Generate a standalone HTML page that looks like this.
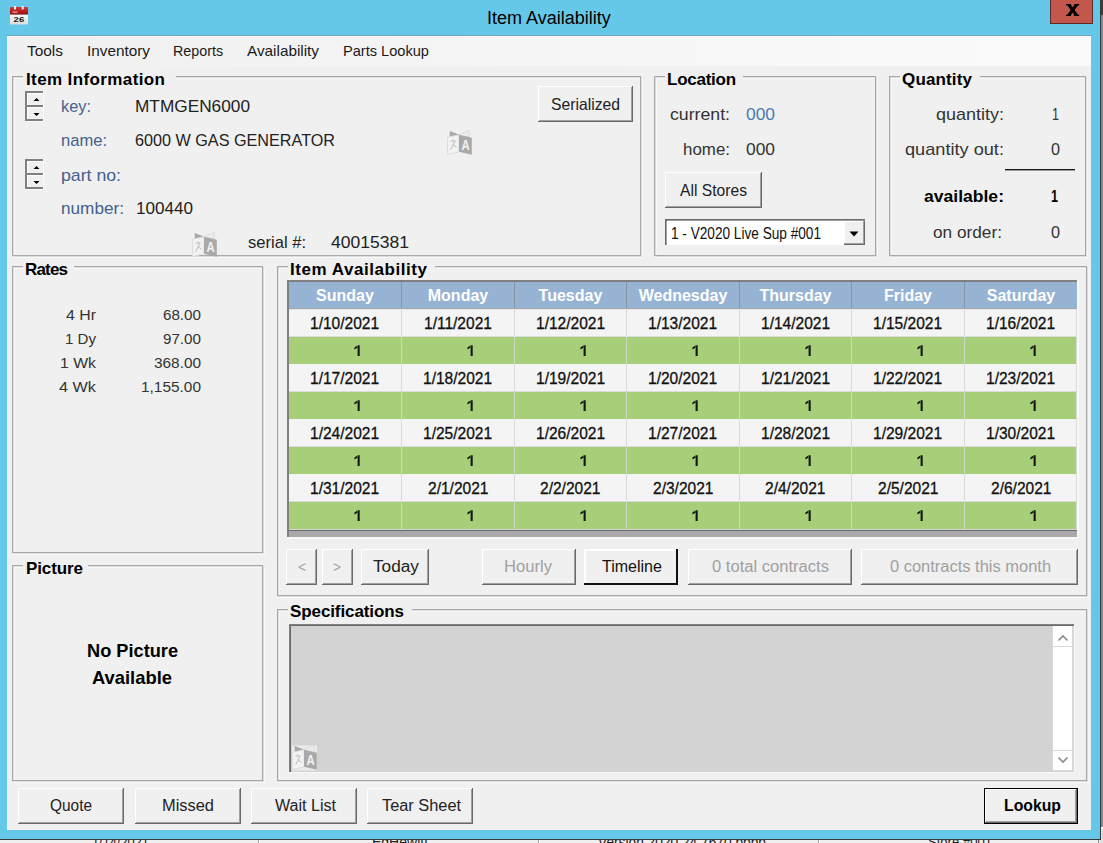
<!DOCTYPE html><html><head><meta charset="utf-8"><style>
html,body{margin:0;padding:0;width:1103px;height:843px;overflow:hidden;background:#f0f0f0}
body{position:relative;font-family:"Liberation Sans",sans-serif}
.a{position:absolute}
.t{position:absolute;white-space:nowrap;transform-origin:0 0}
</style></head><body>
<div class="a" style="left:0px;top:0px;width:1103px;height:843px;background:#f0f0f0;"></div>
<div class="a" style="left:258px;top:830px;width:1px;height:13px;background:#a0a0a0;"></div>
<div class="a" style="left:259px;top:830px;width:1px;height:13px;background:#fff;"></div>
<div class="a" style="left:538px;top:830px;width:1px;height:13px;background:#a0a0a0;"></div>
<div class="a" style="left:539px;top:830px;width:1px;height:13px;background:#fff;"></div>
<div class="a" style="left:818px;top:830px;width:1px;height:13px;background:#a0a0a0;"></div>
<div class="a" style="left:819px;top:830px;width:1px;height:13px;background:#fff;"></div>
<div class="a" style="left:1098px;top:830px;width:1px;height:13px;background:#909090;"></div>
<div class="a" style="left:1099px;top:830px;width:4px;height:13px;background:#e6e6e6;"></div>
<div class="t" style="left:92.00px;top:834px;font-size:15px;line-height:15px;color:#222;transform:scaleX(0.8539);">1/14/2021</div>
<div class="t" style="left:372.00px;top:834px;font-size:15px;line-height:15px;color:#222;transform:scaleX(0.9333);">EdHewitt</div>
<div class="t" style="left:598.00px;top:834px;font-size:15px;line-height:15px;color:#222;transform:scaleX(0.9154);">Version 2020.24.7670 bbbb</div>
<div class="t" style="left:928.00px;top:834px;font-size:15px;line-height:15px;color:#222;transform:scaleX(0.8716);">Store #001</div>
<div class="a" style="left:0px;top:0px;width:1101px;height:839px;background:#65c8e9;"></div>
<div class="a" style="left:1101px;top:0px;width:2px;height:827px;background:#7b8a99;"></div>
<div class="a" style="left:1101px;top:827px;width:2px;height:2px;background:#fafafa;"></div>
<div class="a" style="left:1101px;top:829px;width:2px;height:14px;background:#e0e0e0;"></div>
<div class="a" style="left:1101px;top:0px;width:2px;height:15px;background:#3c3c3c;"></div>
<div class="a" style="left:0px;top:839px;width:1101px;height:1px;background:#3a3a3a;"></div>
<div class="a" style="left:1100px;top:0px;width:1px;height:840px;background:#3a3a3a;"></div>
<div class="a" style="left:1101px;top:829px;width:2px;height:11px;background:#e0e0e0;"></div>
<div class="a" style="left:10px;top:7px;width:18px;height:18px;"></div>
<svg class="a" style="left:10px;top:6px" width="18" height="20" viewBox="0 0 18 20">
<defs><linearGradient id="rg" x1="0" y1="0" x2="0" y2="1"><stop offset="0" stop-color="#d23a3a"/><stop offset="1" stop-color="#a30a0a"/></linearGradient>
<linearGradient id="wg" x1="0" y1="0" x2="0" y2="1"><stop offset="0" stop-color="#fafafa"/><stop offset="1" stop-color="#dcdcdc"/></linearGradient></defs>
<rect x="0" y="8.4" width="18" height="10" rx="0.8" fill="url(#wg)"/>
<rect x="0" y="1" width="18" height="7.6" rx="1.2" fill="url(#rg)"/>
<rect x="4" y="0" width="2" height="3.4" fill="#f4f4f4"/><rect x="11.7" y="0" width="2" height="3.4" fill="#f4f4f4"/>
<rect x="2.5" y="5.4" width="5" height="1.6" fill="#d88a8a"/>
<text x="3.6" y="15.8" font-family="Liberation Sans" font-weight="bold" font-size="8" textLength="10.6" lengthAdjust="spacingAndGlyphs" fill="#1a1010">26</text>
</svg>
<div class="t" style="left:487.00px;top:9px;font-size:18px;line-height:18px;color:#000;">Item Availability</div>
<div class="a" style="left:1050px;top:0px;width:43px;height:24px;background:#c4574c;border:1px solid #5e2a25;border-top:none;box-sizing:border-box;"></div>
<svg class="a" style="left:0;top:0" width="1103" height="30"><polygon points="1066.3,4 1070.2,4 1079,16 1075.1,16" fill="#000"/><polygon points="1075.1,4 1079,4 1070.2,16 1066.3,16" fill="#000"/><rect x="1066" y="4" width="5" height="1.3" fill="#000"/><rect x="1074.2" y="4" width="5" height="1.3" fill="#000"/><rect x="1066" y="14.7" width="5" height="1.3" fill="#000"/><rect x="1074.2" y="14.7" width="5" height="1.3" fill="#000"/></svg>
<div class="a" style="left:6px;top:35px;width:1085px;height:1px;background:#74a6c2;"></div>
<div class="a" style="left:7px;top:36px;width:1084px;height:794px;background:#f0f0f0;"></div>
<div class="a" style="left:7px;top:36px;width:1084px;height:30px;background:linear-gradient(to right,#f0f0f0,#fbfbfb);"></div>
<div class="a" style="left:7px;top:36px;width:1px;height:794px;background:#faf6f6;"></div>
<div class="a" style="left:7px;top:36px;width:1084px;height:1px;background:#faf6f6;"></div>
<div class="t" style="left:27.00px;top:43px;font-size:15px;line-height:15px;color:#1a1a1a;transform:scaleX(1.0278);">Tools</div>
<div class="t" style="left:87.00px;top:43px;font-size:15px;line-height:15px;color:#1a1a1a;transform:scaleX(1.0207);">Inventory</div>
<div class="t" style="left:173.00px;top:43px;font-size:15px;line-height:15px;color:#1a1a1a;transform:scaleX(0.9524);">Reports</div>
<div class="t" style="left:247.00px;top:43px;font-size:15px;line-height:15px;color:#1a1a1a;transform:scaleX(1.0202);">Availability</div>
<div class="t" style="left:343.00px;top:43px;font-size:15px;line-height:15px;color:#1a1a1a;transform:scaleX(0.9726);">Parts Lookup</div>
<div class="a" style="left:14px;top:78px;width:629px;height:180px;border:1px solid #f8f8f8;box-sizing:border-box;"></div>
<div class="a" style="left:13px;top:77px;width:629px;height:180px;border:1px solid #dedede;box-sizing:border-box;"></div>
<div class="a" style="left:12px;top:76px;width:629px;height:180px;border:1px solid #a8a8a8;box-sizing:border-box;"></div>
<div class="a" style="left:23px;top:74px;width:153px;height:5px;background:#f0f0f0;"></div>
<div class="t" style="left:26.00px;top:71px;font-size:17px;line-height:17px;color:#000;font-weight:bold;letter-spacing:0.387px;">Item Information</div>
<div class="a" style="left:25px;top:91px;width:18px;height:2px;background:#808080;"></div>
<div class="a" style="left:25px;top:91px;width:2px;height:30px;background:#808080;"></div>
<div class="a" style="left:27px;top:105px;width:16px;height:2px;background:#808080;"></div>
<div class="a" style="left:27px;top:119px;width:16px;height:2px;background:#808080;"></div>
<div class="a" style="left:27px;top:93px;width:16px;height:1px;background:#fdfdfd;"></div>
<div class="a" style="left:27px;top:93px;width:1px;height:12px;background:#fdfdfd;"></div>
<div class="a" style="left:27px;top:107px;width:16px;height:1px;background:#fdfdfd;"></div>
<div class="a" style="left:27px;top:107px;width:1px;height:12px;background:#fdfdfd;"></div>
<div class="a" style="left:43px;top:91px;width:1px;height:31px;background:#fafafa;"></div>
<div class="a" style="left:25px;top:121px;width:19px;height:1px;background:#fafafa;"></div>
<svg class="a" style="left:33px;top:97px" width="7" height="20"><path d="M0.5 4 L3.5 1 L6.5 4Z M0.5 16 L3.5 19 L6.5 16Z" fill="#000"/></svg>
<div class="a" style="left:25px;top:159px;width:18px;height:2px;background:#808080;"></div>
<div class="a" style="left:25px;top:159px;width:2px;height:30px;background:#808080;"></div>
<div class="a" style="left:27px;top:173px;width:16px;height:2px;background:#808080;"></div>
<div class="a" style="left:27px;top:187px;width:16px;height:2px;background:#808080;"></div>
<div class="a" style="left:27px;top:161px;width:16px;height:1px;background:#fdfdfd;"></div>
<div class="a" style="left:27px;top:161px;width:1px;height:12px;background:#fdfdfd;"></div>
<div class="a" style="left:27px;top:175px;width:16px;height:1px;background:#fdfdfd;"></div>
<div class="a" style="left:27px;top:175px;width:1px;height:12px;background:#fdfdfd;"></div>
<div class="a" style="left:43px;top:159px;width:1px;height:31px;background:#fafafa;"></div>
<div class="a" style="left:25px;top:189px;width:19px;height:1px;background:#fafafa;"></div>
<svg class="a" style="left:33px;top:165px" width="7" height="20"><path d="M0.5 4 L3.5 1 L6.5 4Z M0.5 16 L3.5 19 L6.5 16Z" fill="#000"/></svg>
<div class="t" style="left:61.00px;top:98px;font-size:17px;line-height:17px;color:#44618f;transform:scaleX(0.9617);">key:</div>
<div class="t" style="left:135.00px;top:98px;font-size:17px;line-height:17px;color:#222;transform:scaleX(1.0142);">MTMGEN6000</div>
<div class="t" style="left:61.00px;top:132px;font-size:17px;line-height:17px;color:#44618f;transform:scaleX(0.9733);">name:</div>
<div class="t" style="left:135.00px;top:132px;font-size:17px;line-height:17px;color:#222;transform:scaleX(0.9522);">6000 W GAS GENERATOR</div>
<div class="t" style="left:61.00px;top:167px;font-size:17px;line-height:17px;color:#44618f;transform:scaleX(1.0411);">part no:</div>
<div class="t" style="left:61.00px;top:200px;font-size:17px;line-height:17px;color:#44618f;transform:scaleX(1.0098);">number:</div>
<div class="t" style="left:136.00px;top:200px;font-size:17px;line-height:17px;color:#222;transform:scaleX(1.0054);">100440</div>
<div class="t" style="left:248.00px;top:234px;font-size:17px;line-height:17px;color:#222;transform:scaleX(0.9748);">serial #:</div>
<div class="t" style="left:331.00px;top:234px;font-size:17px;line-height:17px;color:#222;transform:scaleX(1.0311);">40015381</div>
<div class="a" style="left:538px;top:86px;width:95px;height:36px;background:#f0f0f0;box-shadow:inset -1px -1px 0 #696969, inset 1px 1px 0 #fff, inset -2px -2px 0 #a0a0a0;"></div>
<div class="t" style="left:551.00px;top:96px;font-size:16.5px;line-height:16.5px;color:#222;transform:scaleX(0.9526);">Serialized</div>
<svg class="a" style="left:443px;top:126px" width="34" height="34" viewBox="0 0 34 34">
<polygon points="6.7,5 16,8.5 16,9.5 6.7,11.3" fill="#a8a8a8"/>
<polygon points="16,8.5 26.2,4.2 26.2,10.8 16,9.5" fill="#ececec" stroke="#d8d8d8" stroke-width="0.8"/>
<polygon points="4.5,11.3 16,8.7 16,25.8 4.5,28.6" fill="#f2f2f2" stroke="#dadada" stroke-width="0.9"/>
<polygon points="16,8.7 28.8,11.7 28.8,28.8 16,25.8" fill="#a9a9a9"/>
<path d="M7.5 15.2 L12.3 14.8 M12 15 L7.8 23.5 M9.6 13.3 L10.3 14.6 M9.8 18.5 L13.5 21.3" stroke="#bcbcbc" stroke-width="1" fill="none"/>
<text x="18.5" y="23.8" font-family="Liberation Sans" font-weight="bold" font-size="14" textLength="8.2" lengthAdjust="spacingAndGlyphs" fill="#f4f4f4">A</text></svg>
<svg class="a" style="left:188px;top:228px" width="34" height="34" viewBox="0 0 34 34">
<polygon points="6.7,5 16,8.5 16,9.5 6.7,11.3" fill="#a8a8a8"/>
<polygon points="16,8.5 26.2,4.2 26.2,10.8 16,9.5" fill="#ececec" stroke="#d8d8d8" stroke-width="0.8"/>
<polygon points="4.5,11.3 16,8.7 16,25.8 4.5,28.6" fill="#f2f2f2" stroke="#dadada" stroke-width="0.9"/>
<polygon points="16,8.7 28.8,11.7 28.8,28.8 16,25.8" fill="#a9a9a9"/>
<path d="M7.5 15.2 L12.3 14.8 M12 15 L7.8 23.5 M9.6 13.3 L10.3 14.6 M9.8 18.5 L13.5 21.3" stroke="#bcbcbc" stroke-width="1" fill="none"/>
<text x="18.5" y="23.8" font-family="Liberation Sans" font-weight="bold" font-size="14" textLength="8.2" lengthAdjust="spacingAndGlyphs" fill="#f4f4f4">A</text></svg>
<div class="a" style="left:656px;top:78px;width:222px;height:180px;border:1px solid #f8f8f8;box-sizing:border-box;"></div>
<div class="a" style="left:655px;top:77px;width:222px;height:180px;border:1px solid #dedede;box-sizing:border-box;"></div>
<div class="a" style="left:654px;top:76px;width:222px;height:180px;border:1px solid #a8a8a8;box-sizing:border-box;"></div>
<div class="a" style="left:665px;top:74px;width:78px;height:5px;background:#f0f0f0;"></div>
<div class="t" style="left:667.00px;top:71px;font-size:17px;line-height:17px;color:#000;font-weight:bold;letter-spacing:-0.258px;">Location</div>
<div class="t" style="left:670.00px;top:106px;font-size:17px;line-height:17px;color:#333;transform:scaleX(1.0411);">current:</div>
<div class="t" style="left:746.00px;top:106px;font-size:17px;line-height:17px;color:#4a7ab4;transform:scaleX(1.0215);">000</div>
<div class="t" style="left:683.00px;top:141px;font-size:17px;line-height:17px;color:#333;transform:scaleX(0.9945);">home:</div>
<div class="t" style="left:746.00px;top:141px;font-size:17px;line-height:17px;color:#333;transform:scaleX(1.0215);">000</div>
<div class="a" style="left:665px;top:172px;width:97px;height:36px;background:#f0f0f0;box-shadow:inset -1px -1px 0 #696969, inset 1px 1px 0 #fff, inset -2px -2px 0 #a0a0a0;"></div>
<div class="t" style="left:680.00px;top:182px;font-size:16.5px;line-height:16.5px;color:#222;transform:scaleX(0.9487);">All Stores</div>
<div class="a" style="left:665px;top:219px;width:201px;height:27px;background:#fff;"></div>
<div class="a" style="left:665px;top:219px;width:201px;height:2px;background:#696969;"></div>
<div class="a" style="left:665px;top:219px;width:2px;height:27px;background:#696969;"></div>
<div class="a" style="left:667px;top:220px;width:199px;height:1px;background:#a0a0a0;"></div>
<div class="a" style="left:666px;top:221px;width:1px;height:25px;background:#a0a0a0;"></div>
<div class="a" style="left:865px;top:219px;width:1px;height:27px;background:#f0f0f0;"></div>
<div class="a" style="left:665px;top:245px;width:201px;height:1px;background:#f0f0f0;"></div>
<div class="t" style="left:671.00px;top:226px;font-size:16px;line-height:16px;color:#111;transform:scaleX(0.8515);">1 - V2020 Live Sup #001</div>
<div class="a" style="left:844px;top:221px;width:21px;height:24px;background:#f0f0f0;box-shadow:inset -1px -1px 0 #696969, inset -2px -2px 0 #a0a0a0, inset 1px 1px 0 #fff;"></div>
<svg class="a" style="left:849px;top:231px" width="10" height="6"><path d="M0.5 0.5 L9.5 0.5 L5 5.5Z" fill="#000"/></svg>
<div class="a" style="left:891px;top:78px;width:197px;height:180px;border:1px solid #f8f8f8;box-sizing:border-box;"></div>
<div class="a" style="left:890px;top:77px;width:197px;height:180px;border:1px solid #dedede;box-sizing:border-box;"></div>
<div class="a" style="left:889px;top:76px;width:197px;height:180px;border:1px solid #a8a8a8;box-sizing:border-box;"></div>
<div class="a" style="left:900px;top:74px;width:80px;height:5px;background:#f0f0f0;"></div>
<div class="t" style="left:902.00px;top:71px;font-size:17px;line-height:17px;color:#000;font-weight:bold;letter-spacing:0.152px;">Quantity</div>
<div class="t" style="left:936.00px;top:106px;font-size:17px;line-height:17px;color:#333;transform:scaleX(1.0582);">quantity:</div>
<div class="t" style="left:1052.00px;top:106px;font-size:17px;line-height:17px;color:#333;transform:scaleX(0.7419);">1</div>
<div class="t" style="left:905.00px;top:141px;font-size:17px;line-height:17px;color:#333;transform:scaleX(1.0685);">quantity out:</div>
<div class="t" style="left:1051.00px;top:141px;font-size:17px;line-height:17px;color:#333;transform:scaleX(0.9539);">0</div>
<div class="a" style="left:1005px;top:169px;width:70px;height:1px;background:#1a1a1a;"></div>
<div class="a" style="left:1005px;top:170px;width:70px;height:1px;background:#9a9a9a;"></div>
<div class="t" style="left:924.00px;top:188px;font-size:17px;line-height:17px;color:#000;font-weight:bold;transform:scaleX(1.0320);">available:</div>
<div class="t" style="left:1051.00px;top:188px;font-size:17px;line-height:17px;color:#000;font-weight:bold;transform:scaleX(0.7419);">1</div>
<div class="t" style="left:933.00px;top:224px;font-size:17px;line-height:17px;color:#333;transform:scaleX(1.0134);">on order:</div>
<div class="t" style="left:1051.00px;top:224px;font-size:17px;line-height:17px;color:#333;transform:scaleX(0.9539);">0</div>
<div class="a" style="left:14px;top:268px;width:251px;height:287px;border:1px solid #f8f8f8;box-sizing:border-box;"></div>
<div class="a" style="left:13px;top:267px;width:251px;height:287px;border:1px solid #dedede;box-sizing:border-box;"></div>
<div class="a" style="left:12px;top:266px;width:251px;height:287px;border:1px solid #a8a8a8;box-sizing:border-box;"></div>
<div class="a" style="left:23px;top:264px;width:51px;height:5px;background:#f0f0f0;"></div>
<div class="t" style="left:25.00px;top:261px;font-size:17px;line-height:17px;color:#000;font-weight:bold;letter-spacing:-0.831px;">Rates</div>
<div class="t" style="left:66.00px;top:307px;font-size:15px;line-height:15px;color:#333;transform:scaleX(1.0582);">4 Hr</div>
<div class="t" style="left:163.00px;top:307px;font-size:15px;line-height:15px;color:#333;transform:scaleX(1.0113);">68.00</div>
<div class="t" style="left:65.00px;top:331px;font-size:15px;line-height:15px;color:#333;transform:scaleX(1.0057);">1 Dy</div>
<div class="t" style="left:163.00px;top:331px;font-size:15px;line-height:15px;color:#333;transform:scaleX(1.0113);">97.00</div>
<div class="t" style="left:60.00px;top:355px;font-size:15px;line-height:15px;color:#333;transform:scaleX(1.0503);">1 Wk</div>
<div class="t" style="left:154.00px;top:355px;font-size:15px;line-height:15px;color:#333;transform:scaleX(1.0240);">368.00</div>
<div class="t" style="left:59.00px;top:379px;font-size:15px;line-height:15px;color:#333;transform:scaleX(1.0795);">4 Wk</div>
<div class="t" style="left:141.00px;top:379px;font-size:15px;line-height:15px;color:#333;transform:scaleX(1.0270);">1,155.00</div>
<div class="a" style="left:14px;top:567px;width:251px;height:216px;border:1px solid #f8f8f8;box-sizing:border-box;"></div>
<div class="a" style="left:13px;top:566px;width:251px;height:216px;border:1px solid #dedede;box-sizing:border-box;"></div>
<div class="a" style="left:12px;top:565px;width:251px;height:216px;border:1px solid #a8a8a8;box-sizing:border-box;"></div>
<div class="a" style="left:23px;top:563px;width:65px;height:5px;background:#f0f0f0;"></div>
<div class="t" style="left:26.00px;top:560px;font-size:17px;line-height:17px;color:#000;font-weight:bold;letter-spacing:-0.105px;">Picture</div>
<div class="t" style="left:87.00px;top:641px;font-size:19px;line-height:19px;color:#000;font-weight:bold;transform:scaleX(0.9579);">No Picture</div>
<div class="t" style="left:92.00px;top:668px;font-size:19px;line-height:19px;color:#000;font-weight:bold;transform:scaleX(0.9668);">Available</div>
<div class="a" style="left:279px;top:268px;width:810px;height:330px;border:1px solid #f8f8f8;box-sizing:border-box;"></div>
<div class="a" style="left:278px;top:267px;width:810px;height:330px;border:1px solid #dedede;box-sizing:border-box;"></div>
<div class="a" style="left:277px;top:266px;width:810px;height:330px;border:1px solid #a8a8a8;box-sizing:border-box;"></div>
<div class="a" style="left:288px;top:264px;width:147px;height:5px;background:#f0f0f0;"></div>
<div class="t" style="left:290.00px;top:261px;font-size:17px;line-height:17px;color:#000;font-weight:bold;letter-spacing:0.551px;">Item Availability</div>
<div class="a" style="left:287px;top:280px;width:792px;height:259px;background:#f8f8f8;"></div>
<div class="a" style="left:287px;top:280px;width:790px;height:257px;background:#808080;"></div>
<div class="a" style="left:289px;top:282px;width:788px;height:247px;background:#f4f4f4;"></div>
<div class="a" style="left:289px;top:529px;width:788px;height:1px;background:#d8d8d8;"></div>
<div class="a" style="left:289px;top:530px;width:788px;height:1px;background:#696969;"></div>
<div class="a" style="left:289px;top:531px;width:788px;height:6px;background:#a9a9a9;"></div>
<div class="a" style="left:289px;top:282px;width:788px;height:26px;background:#97b3d4;"></div>
<div class="a" style="left:289px;top:308px;width:788px;height:1px;background:#a3a9b0;"></div>
<div class="a" style="left:289px;top:309px;width:788px;height:1px;background:#e4e4e6;"></div>
<div class="a" style="left:401px;top:282px;width:1px;height:26px;background:#8894a4;"></div>
<div class="a" style="left:514px;top:282px;width:1px;height:26px;background:#8894a4;"></div>
<div class="a" style="left:626px;top:282px;width:1px;height:26px;background:#8894a4;"></div>
<div class="a" style="left:739px;top:282px;width:1px;height:26px;background:#8894a4;"></div>
<div class="a" style="left:851px;top:282px;width:1px;height:26px;background:#8894a4;"></div>
<div class="a" style="left:964px;top:282px;width:1px;height:26px;background:#8894a4;"></div>
<div class="a" style="left:289px;top:310px;width:788px;height:26px;background:#f4f4f4;"></div>
<div class="a" style="left:289px;top:336px;width:788px;height:1px;background:#dcdbe0;"></div>
<div class="a" style="left:289px;top:337px;width:788px;height:27px;background:#a7cf79;"></div>
<div class="a" style="left:401px;top:310px;width:1px;height:26px;background:#d9d9d9;"></div>
<div class="a" style="left:401px;top:337px;width:1px;height:27px;background:#cdd8c4;"></div>
<div class="a" style="left:514px;top:310px;width:1px;height:26px;background:#d9d9d9;"></div>
<div class="a" style="left:514px;top:337px;width:1px;height:27px;background:#cdd8c4;"></div>
<div class="a" style="left:626px;top:310px;width:1px;height:26px;background:#d9d9d9;"></div>
<div class="a" style="left:626px;top:337px;width:1px;height:27px;background:#cdd8c4;"></div>
<div class="a" style="left:739px;top:310px;width:1px;height:26px;background:#d9d9d9;"></div>
<div class="a" style="left:739px;top:337px;width:1px;height:27px;background:#cdd8c4;"></div>
<div class="a" style="left:851px;top:310px;width:1px;height:26px;background:#d9d9d9;"></div>
<div class="a" style="left:851px;top:337px;width:1px;height:27px;background:#cdd8c4;"></div>
<div class="a" style="left:964px;top:310px;width:1px;height:26px;background:#d9d9d9;"></div>
<div class="a" style="left:964px;top:337px;width:1px;height:27px;background:#cdd8c4;"></div>
<div class="a" style="left:1076px;top:310px;width:1px;height:26px;background:#dcdcdc;"></div>
<div class="a" style="left:1076px;top:337px;width:1px;height:27px;background:#d4dccc;"></div>
<div class="t" style="left:310.47px;top:316px;font-size:16px;line-height:16px;color:#111;transform:scaleX(0.9700);-webkit-text-stroke:0.3px #111;">1/10/2021</div>
<svg class="a" style="left:354.0px;top:345px" width="8" height="11"><path d="M3.6 0.3 L5.7 0.3 L5.7 11 L3.6 11 Z M3.8 0.3 L0.4 2.6 L0.4 4.6 L4.2 2.2Z" fill="#151515"/></svg>
<div class="t" style="left:424.05px;top:316px;font-size:16px;line-height:16px;color:#111;transform:scaleX(0.9700);-webkit-text-stroke:0.3px #111;">1/11/2021</div>
<svg class="a" style="left:467.0px;top:345px" width="8" height="11"><path d="M3.6 0.3 L5.7 0.3 L5.7 11 L3.6 11 Z M3.8 0.3 L0.4 2.6 L0.4 4.6 L4.2 2.2Z" fill="#151515"/></svg>
<div class="t" style="left:535.97px;top:316px;font-size:16px;line-height:16px;color:#111;transform:scaleX(0.9700);-webkit-text-stroke:0.3px #111;">1/12/2021</div>
<svg class="a" style="left:579.5px;top:345px" width="8" height="11"><path d="M3.6 0.3 L5.7 0.3 L5.7 11 L3.6 11 Z M3.8 0.3 L0.4 2.6 L0.4 4.6 L4.2 2.2Z" fill="#151515"/></svg>
<div class="t" style="left:648.47px;top:316px;font-size:16px;line-height:16px;color:#111;transform:scaleX(0.9700);-webkit-text-stroke:0.3px #111;">1/13/2021</div>
<svg class="a" style="left:692.0px;top:345px" width="8" height="11"><path d="M3.6 0.3 L5.7 0.3 L5.7 11 L3.6 11 Z M3.8 0.3 L0.4 2.6 L0.4 4.6 L4.2 2.2Z" fill="#151515"/></svg>
<div class="t" style="left:760.97px;top:316px;font-size:16px;line-height:16px;color:#111;transform:scaleX(0.9700);-webkit-text-stroke:0.3px #111;">1/14/2021</div>
<svg class="a" style="left:804.5px;top:345px" width="8" height="11"><path d="M3.6 0.3 L5.7 0.3 L5.7 11 L3.6 11 Z M3.8 0.3 L0.4 2.6 L0.4 4.6 L4.2 2.2Z" fill="#151515"/></svg>
<div class="t" style="left:873.47px;top:316px;font-size:16px;line-height:16px;color:#111;transform:scaleX(0.9700);-webkit-text-stroke:0.3px #111;">1/15/2021</div>
<svg class="a" style="left:917.0px;top:345px" width="8" height="11"><path d="M3.6 0.3 L5.7 0.3 L5.7 11 L3.6 11 Z M3.8 0.3 L0.4 2.6 L0.4 4.6 L4.2 2.2Z" fill="#151515"/></svg>
<div class="t" style="left:986.47px;top:316px;font-size:16px;line-height:16px;color:#111;transform:scaleX(0.9700);-webkit-text-stroke:0.3px #111;">1/16/2021</div>
<svg class="a" style="left:1030.0px;top:345px" width="8" height="11"><path d="M3.6 0.3 L5.7 0.3 L5.7 11 L3.6 11 Z M3.8 0.3 L0.4 2.6 L0.4 4.6 L4.2 2.2Z" fill="#151515"/></svg>
<div class="a" style="left:289px;top:364px;width:788px;height:27px;background:#f4f4f4;"></div>
<div class="a" style="left:289px;top:391px;width:788px;height:1px;background:#dcdbe0;"></div>
<div class="a" style="left:289px;top:392px;width:788px;height:27px;background:#a7cf79;"></div>
<div class="a" style="left:401px;top:364px;width:1px;height:27px;background:#d9d9d9;"></div>
<div class="a" style="left:401px;top:392px;width:1px;height:27px;background:#cdd8c4;"></div>
<div class="a" style="left:514px;top:364px;width:1px;height:27px;background:#d9d9d9;"></div>
<div class="a" style="left:514px;top:392px;width:1px;height:27px;background:#cdd8c4;"></div>
<div class="a" style="left:626px;top:364px;width:1px;height:27px;background:#d9d9d9;"></div>
<div class="a" style="left:626px;top:392px;width:1px;height:27px;background:#cdd8c4;"></div>
<div class="a" style="left:739px;top:364px;width:1px;height:27px;background:#d9d9d9;"></div>
<div class="a" style="left:739px;top:392px;width:1px;height:27px;background:#cdd8c4;"></div>
<div class="a" style="left:851px;top:364px;width:1px;height:27px;background:#d9d9d9;"></div>
<div class="a" style="left:851px;top:392px;width:1px;height:27px;background:#cdd8c4;"></div>
<div class="a" style="left:964px;top:364px;width:1px;height:27px;background:#d9d9d9;"></div>
<div class="a" style="left:964px;top:392px;width:1px;height:27px;background:#cdd8c4;"></div>
<div class="a" style="left:1076px;top:364px;width:1px;height:27px;background:#dcdcdc;"></div>
<div class="a" style="left:1076px;top:392px;width:1px;height:27px;background:#d4dccc;"></div>
<div class="t" style="left:310.47px;top:371px;font-size:16px;line-height:16px;color:#111;transform:scaleX(0.9700);-webkit-text-stroke:0.3px #111;">1/17/2021</div>
<svg class="a" style="left:354.0px;top:400px" width="8" height="11"><path d="M3.6 0.3 L5.7 0.3 L5.7 11 L3.6 11 Z M3.8 0.3 L0.4 2.6 L0.4 4.6 L4.2 2.2Z" fill="#151515"/></svg>
<div class="t" style="left:423.47px;top:371px;font-size:16px;line-height:16px;color:#111;transform:scaleX(0.9700);-webkit-text-stroke:0.3px #111;">1/18/2021</div>
<svg class="a" style="left:467.0px;top:400px" width="8" height="11"><path d="M3.6 0.3 L5.7 0.3 L5.7 11 L3.6 11 Z M3.8 0.3 L0.4 2.6 L0.4 4.6 L4.2 2.2Z" fill="#151515"/></svg>
<div class="t" style="left:535.97px;top:371px;font-size:16px;line-height:16px;color:#111;transform:scaleX(0.9700);-webkit-text-stroke:0.3px #111;">1/19/2021</div>
<svg class="a" style="left:579.5px;top:400px" width="8" height="11"><path d="M3.6 0.3 L5.7 0.3 L5.7 11 L3.6 11 Z M3.8 0.3 L0.4 2.6 L0.4 4.6 L4.2 2.2Z" fill="#151515"/></svg>
<div class="t" style="left:648.47px;top:371px;font-size:16px;line-height:16px;color:#111;transform:scaleX(0.9700);-webkit-text-stroke:0.3px #111;">1/20/2021</div>
<svg class="a" style="left:692.0px;top:400px" width="8" height="11"><path d="M3.6 0.3 L5.7 0.3 L5.7 11 L3.6 11 Z M3.8 0.3 L0.4 2.6 L0.4 4.6 L4.2 2.2Z" fill="#151515"/></svg>
<div class="t" style="left:760.97px;top:371px;font-size:16px;line-height:16px;color:#111;transform:scaleX(0.9700);-webkit-text-stroke:0.3px #111;">1/21/2021</div>
<svg class="a" style="left:804.5px;top:400px" width="8" height="11"><path d="M3.6 0.3 L5.7 0.3 L5.7 11 L3.6 11 Z M3.8 0.3 L0.4 2.6 L0.4 4.6 L4.2 2.2Z" fill="#151515"/></svg>
<div class="t" style="left:873.47px;top:371px;font-size:16px;line-height:16px;color:#111;transform:scaleX(0.9700);-webkit-text-stroke:0.3px #111;">1/22/2021</div>
<svg class="a" style="left:917.0px;top:400px" width="8" height="11"><path d="M3.6 0.3 L5.7 0.3 L5.7 11 L3.6 11 Z M3.8 0.3 L0.4 2.6 L0.4 4.6 L4.2 2.2Z" fill="#151515"/></svg>
<div class="t" style="left:986.47px;top:371px;font-size:16px;line-height:16px;color:#111;transform:scaleX(0.9700);-webkit-text-stroke:0.3px #111;">1/23/2021</div>
<svg class="a" style="left:1030.0px;top:400px" width="8" height="11"><path d="M3.6 0.3 L5.7 0.3 L5.7 11 L3.6 11 Z M3.8 0.3 L0.4 2.6 L0.4 4.6 L4.2 2.2Z" fill="#151515"/></svg>
<div class="a" style="left:289px;top:419px;width:788px;height:27px;background:#f4f4f4;"></div>
<div class="a" style="left:289px;top:446px;width:788px;height:1px;background:#dcdbe0;"></div>
<div class="a" style="left:289px;top:447px;width:788px;height:27px;background:#a7cf79;"></div>
<div class="a" style="left:401px;top:419px;width:1px;height:27px;background:#d9d9d9;"></div>
<div class="a" style="left:401px;top:447px;width:1px;height:27px;background:#cdd8c4;"></div>
<div class="a" style="left:514px;top:419px;width:1px;height:27px;background:#d9d9d9;"></div>
<div class="a" style="left:514px;top:447px;width:1px;height:27px;background:#cdd8c4;"></div>
<div class="a" style="left:626px;top:419px;width:1px;height:27px;background:#d9d9d9;"></div>
<div class="a" style="left:626px;top:447px;width:1px;height:27px;background:#cdd8c4;"></div>
<div class="a" style="left:739px;top:419px;width:1px;height:27px;background:#d9d9d9;"></div>
<div class="a" style="left:739px;top:447px;width:1px;height:27px;background:#cdd8c4;"></div>
<div class="a" style="left:851px;top:419px;width:1px;height:27px;background:#d9d9d9;"></div>
<div class="a" style="left:851px;top:447px;width:1px;height:27px;background:#cdd8c4;"></div>
<div class="a" style="left:964px;top:419px;width:1px;height:27px;background:#d9d9d9;"></div>
<div class="a" style="left:964px;top:447px;width:1px;height:27px;background:#cdd8c4;"></div>
<div class="a" style="left:1076px;top:419px;width:1px;height:27px;background:#dcdcdc;"></div>
<div class="a" style="left:1076px;top:447px;width:1px;height:27px;background:#d4dccc;"></div>
<div class="t" style="left:310.47px;top:426px;font-size:16px;line-height:16px;color:#111;transform:scaleX(0.9700);-webkit-text-stroke:0.3px #111;">1/24/2021</div>
<svg class="a" style="left:354.0px;top:455px" width="8" height="11"><path d="M3.6 0.3 L5.7 0.3 L5.7 11 L3.6 11 Z M3.8 0.3 L0.4 2.6 L0.4 4.6 L4.2 2.2Z" fill="#151515"/></svg>
<div class="t" style="left:423.47px;top:426px;font-size:16px;line-height:16px;color:#111;transform:scaleX(0.9700);-webkit-text-stroke:0.3px #111;">1/25/2021</div>
<svg class="a" style="left:467.0px;top:455px" width="8" height="11"><path d="M3.6 0.3 L5.7 0.3 L5.7 11 L3.6 11 Z M3.8 0.3 L0.4 2.6 L0.4 4.6 L4.2 2.2Z" fill="#151515"/></svg>
<div class="t" style="left:535.97px;top:426px;font-size:16px;line-height:16px;color:#111;transform:scaleX(0.9700);-webkit-text-stroke:0.3px #111;">1/26/2021</div>
<svg class="a" style="left:579.5px;top:455px" width="8" height="11"><path d="M3.6 0.3 L5.7 0.3 L5.7 11 L3.6 11 Z M3.8 0.3 L0.4 2.6 L0.4 4.6 L4.2 2.2Z" fill="#151515"/></svg>
<div class="t" style="left:648.47px;top:426px;font-size:16px;line-height:16px;color:#111;transform:scaleX(0.9700);-webkit-text-stroke:0.3px #111;">1/27/2021</div>
<svg class="a" style="left:692.0px;top:455px" width="8" height="11"><path d="M3.6 0.3 L5.7 0.3 L5.7 11 L3.6 11 Z M3.8 0.3 L0.4 2.6 L0.4 4.6 L4.2 2.2Z" fill="#151515"/></svg>
<div class="t" style="left:760.97px;top:426px;font-size:16px;line-height:16px;color:#111;transform:scaleX(0.9700);-webkit-text-stroke:0.3px #111;">1/28/2021</div>
<svg class="a" style="left:804.5px;top:455px" width="8" height="11"><path d="M3.6 0.3 L5.7 0.3 L5.7 11 L3.6 11 Z M3.8 0.3 L0.4 2.6 L0.4 4.6 L4.2 2.2Z" fill="#151515"/></svg>
<div class="t" style="left:873.47px;top:426px;font-size:16px;line-height:16px;color:#111;transform:scaleX(0.9700);-webkit-text-stroke:0.3px #111;">1/29/2021</div>
<svg class="a" style="left:917.0px;top:455px" width="8" height="11"><path d="M3.6 0.3 L5.7 0.3 L5.7 11 L3.6 11 Z M3.8 0.3 L0.4 2.6 L0.4 4.6 L4.2 2.2Z" fill="#151515"/></svg>
<div class="t" style="left:986.47px;top:426px;font-size:16px;line-height:16px;color:#111;transform:scaleX(0.9700);-webkit-text-stroke:0.3px #111;">1/30/2021</div>
<svg class="a" style="left:1030.0px;top:455px" width="8" height="11"><path d="M3.6 0.3 L5.7 0.3 L5.7 11 L3.6 11 Z M3.8 0.3 L0.4 2.6 L0.4 4.6 L4.2 2.2Z" fill="#151515"/></svg>
<div class="a" style="left:289px;top:474px;width:788px;height:27px;background:#f4f4f4;"></div>
<div class="a" style="left:289px;top:501px;width:788px;height:1px;background:#dcdbe0;"></div>
<div class="a" style="left:289px;top:502px;width:788px;height:27px;background:#a7cf79;"></div>
<div class="a" style="left:401px;top:474px;width:1px;height:27px;background:#d9d9d9;"></div>
<div class="a" style="left:401px;top:502px;width:1px;height:27px;background:#cdd8c4;"></div>
<div class="a" style="left:514px;top:474px;width:1px;height:27px;background:#d9d9d9;"></div>
<div class="a" style="left:514px;top:502px;width:1px;height:27px;background:#cdd8c4;"></div>
<div class="a" style="left:626px;top:474px;width:1px;height:27px;background:#d9d9d9;"></div>
<div class="a" style="left:626px;top:502px;width:1px;height:27px;background:#cdd8c4;"></div>
<div class="a" style="left:739px;top:474px;width:1px;height:27px;background:#d9d9d9;"></div>
<div class="a" style="left:739px;top:502px;width:1px;height:27px;background:#cdd8c4;"></div>
<div class="a" style="left:851px;top:474px;width:1px;height:27px;background:#d9d9d9;"></div>
<div class="a" style="left:851px;top:502px;width:1px;height:27px;background:#cdd8c4;"></div>
<div class="a" style="left:964px;top:474px;width:1px;height:27px;background:#d9d9d9;"></div>
<div class="a" style="left:964px;top:502px;width:1px;height:27px;background:#cdd8c4;"></div>
<div class="a" style="left:1076px;top:474px;width:1px;height:27px;background:#dcdcdc;"></div>
<div class="a" style="left:1076px;top:502px;width:1px;height:27px;background:#d4dccc;"></div>
<div class="t" style="left:310.47px;top:481px;font-size:16px;line-height:16px;color:#111;transform:scaleX(0.9700);-webkit-text-stroke:0.3px #111;">1/31/2021</div>
<svg class="a" style="left:354.0px;top:510px" width="8" height="11"><path d="M3.6 0.3 L5.7 0.3 L5.7 11 L3.6 11 Z M3.8 0.3 L0.4 2.6 L0.4 4.6 L4.2 2.2Z" fill="#151515"/></svg>
<div class="t" style="left:427.77px;top:481px;font-size:16px;line-height:16px;color:#111;transform:scaleX(0.9700);-webkit-text-stroke:0.3px #111;">2/1/2021</div>
<svg class="a" style="left:467.0px;top:510px" width="8" height="11"><path d="M3.6 0.3 L5.7 0.3 L5.7 11 L3.6 11 Z M3.8 0.3 L0.4 2.6 L0.4 4.6 L4.2 2.2Z" fill="#151515"/></svg>
<div class="t" style="left:540.27px;top:481px;font-size:16px;line-height:16px;color:#111;transform:scaleX(0.9700);-webkit-text-stroke:0.3px #111;">2/2/2021</div>
<svg class="a" style="left:579.5px;top:510px" width="8" height="11"><path d="M3.6 0.3 L5.7 0.3 L5.7 11 L3.6 11 Z M3.8 0.3 L0.4 2.6 L0.4 4.6 L4.2 2.2Z" fill="#151515"/></svg>
<div class="t" style="left:652.77px;top:481px;font-size:16px;line-height:16px;color:#111;transform:scaleX(0.9700);-webkit-text-stroke:0.3px #111;">2/3/2021</div>
<svg class="a" style="left:692.0px;top:510px" width="8" height="11"><path d="M3.6 0.3 L5.7 0.3 L5.7 11 L3.6 11 Z M3.8 0.3 L0.4 2.6 L0.4 4.6 L4.2 2.2Z" fill="#151515"/></svg>
<div class="t" style="left:765.27px;top:481px;font-size:16px;line-height:16px;color:#111;transform:scaleX(0.9700);-webkit-text-stroke:0.3px #111;">2/4/2021</div>
<svg class="a" style="left:804.5px;top:510px" width="8" height="11"><path d="M3.6 0.3 L5.7 0.3 L5.7 11 L3.6 11 Z M3.8 0.3 L0.4 2.6 L0.4 4.6 L4.2 2.2Z" fill="#151515"/></svg>
<div class="t" style="left:877.77px;top:481px;font-size:16px;line-height:16px;color:#111;transform:scaleX(0.9700);-webkit-text-stroke:0.3px #111;">2/5/2021</div>
<svg class="a" style="left:917.0px;top:510px" width="8" height="11"><path d="M3.6 0.3 L5.7 0.3 L5.7 11 L3.6 11 Z M3.8 0.3 L0.4 2.6 L0.4 4.6 L4.2 2.2Z" fill="#151515"/></svg>
<div class="t" style="left:990.77px;top:481px;font-size:16px;line-height:16px;color:#111;transform:scaleX(0.9700);-webkit-text-stroke:0.3px #111;">2/6/2021</div>
<svg class="a" style="left:1030.0px;top:510px" width="8" height="11"><path d="M3.6 0.3 L5.7 0.3 L5.7 11 L3.6 11 Z M3.8 0.3 L0.4 2.6 L0.4 4.6 L4.2 2.2Z" fill="#151515"/></svg>
<div class="t" style="left:316.12px;top:288px;font-size:16px;line-height:16px;color:#fff;font-weight:bold;">Sunday</div>
<div class="t" style="left:427.76px;top:288px;font-size:16px;line-height:16px;color:#fff;font-weight:bold;">Monday</div>
<div class="t" style="left:538.62px;top:288px;font-size:16px;line-height:16px;color:#fff;font-weight:bold;">Tuesday</div>
<div class="t" style="left:638.68px;top:288px;font-size:16px;line-height:16px;color:#fff;font-weight:bold;">Wednesday</div>
<div class="t" style="left:759.50px;top:288px;font-size:16px;line-height:16px;color:#fff;font-weight:bold;">Thursday</div>
<div class="t" style="left:884.00px;top:288px;font-size:16px;line-height:16px;color:#fff;font-weight:bold;">Friday</div>
<div class="t" style="left:986.76px;top:288px;font-size:16px;line-height:16px;color:#fff;font-weight:bold;">Saturday</div>
<div class="a" style="left:286px;top:549px;width:31px;height:36px;background:#f0f0f0;box-shadow:inset -1px -1px 0 #696969, inset 1px 1px 0 #fff, inset -2px -2px 0 #a0a0a0;"></div>
<div class="t" style="left:298.00px;top:559px;font-size:15px;line-height:15px;color:#a0a0a0;transform:scaleX(0.9117);">&lt;</div>
<div class="a" style="left:322px;top:549px;width:31px;height:36px;background:#f0f0f0;box-shadow:inset -1px -1px 0 #696969, inset 1px 1px 0 #fff, inset -2px -2px 0 #a0a0a0;"></div>
<div class="t" style="left:333.00px;top:559px;font-size:15px;line-height:15px;color:#a0a0a0;transform:scaleX(0.9117);">&gt;</div>
<div class="a" style="left:361px;top:549px;width:68px;height:36px;background:#f0f0f0;box-shadow:inset -1px -1px 0 #696969, inset 1px 1px 0 #fff, inset -2px -2px 0 #a0a0a0;"></div>
<div class="t" style="left:373.00px;top:559px;font-size:16px;line-height:16px;color:#222;transform:scaleX(1.0768);">Today</div>
<div class="a" style="left:482px;top:549px;width:94px;height:36px;background:#f0f0f0;box-shadow:inset -1px -1px 0 #696969, inset 1px 1px 0 #fff, inset -2px -2px 0 #a0a0a0;"></div>
<div class="t" style="left:504.00px;top:559px;font-size:16px;line-height:16px;color:#a0a0a0;transform:scaleX(1.0381);">Hourly</div>
<div class="a" style="left:584px;top:549px;width:94px;height:36px;background:#f0f0f0;box-shadow:inset -2px -2px 0 #111, inset 2px 2px 0 #fff;"></div>
<div class="t" style="left:602.00px;top:559px;font-size:16px;line-height:16px;color:#111;">Timeline</div>
<div class="a" style="left:688px;top:549px;width:164px;height:36px;background:#f0f0f0;box-shadow:inset -1px -1px 0 #696969, inset 1px 1px 0 #fff, inset -2px -2px 0 #a0a0a0;"></div>
<div class="t" style="left:712.00px;top:559px;font-size:16px;line-height:16px;color:#a0a0a0;transform:scaleX(1.0358);">0 total contracts</div>
<div class="a" style="left:861px;top:549px;width:217px;height:36px;background:#f0f0f0;box-shadow:inset -1px -1px 0 #696969, inset 1px 1px 0 #fff, inset -2px -2px 0 #a0a0a0;"></div>
<div class="t" style="left:890.00px;top:559px;font-size:16px;line-height:16px;color:#a0a0a0;transform:scaleX(1.0289);">0 contracts this month</div>
<div class="a" style="left:279px;top:611px;width:810px;height:172px;border:1px solid #f8f8f8;box-sizing:border-box;"></div>
<div class="a" style="left:278px;top:610px;width:810px;height:172px;border:1px solid #dedede;box-sizing:border-box;"></div>
<div class="a" style="left:277px;top:609px;width:810px;height:172px;border:1px solid #a8a8a8;box-sizing:border-box;"></div>
<div class="a" style="left:288px;top:607px;width:124px;height:5px;background:#f0f0f0;"></div>
<div class="t" style="left:290.00px;top:603px;font-size:17px;line-height:17px;color:#000;font-weight:bold;letter-spacing:-0.097px;">Specifications</div>
<div class="a" style="left:289px;top:624px;width:786px;height:149px;background:#f8f8f8;"></div>
<div class="a" style="left:289px;top:624px;width:785px;height:148px;background:#d3d3d3;"></div>
<div class="a" style="left:289px;top:624px;width:785px;height:1px;background:#808080;"></div>
<div class="a" style="left:289px;top:625px;width:785px;height:1px;background:#696969;"></div>
<div class="a" style="left:289px;top:624px;width:1px;height:148px;background:#808080;"></div>
<div class="a" style="left:290px;top:625px;width:1px;height:147px;background:#696969;"></div>
<div class="a" style="left:1052px;top:626px;width:22px;height:145px;background:#d8d8d8;"></div>
<div class="a" style="left:1053px;top:626px;width:19px;height:144px;background:#ffffff;"></div>
<div class="a" style="left:1053px;top:646px;width:19px;height:1px;background:#dadada;"></div>
<div class="a" style="left:1053px;top:750px;width:19px;height:1px;background:#dadada;"></div>
<svg class="a" style="left:1056px;top:632px" width="14" height="12"><path d="M2.5 8.5 L7 4 L11.5 8.5" stroke="#8a8a8a" stroke-width="1.6" fill="none"/></svg>
<svg class="a" style="left:1056px;top:754px" width="14" height="12"><path d="M2.5 3.5 L7 8 L11.5 3.5" stroke="#8a8a8a" stroke-width="1.6" fill="none"/></svg>
<svg class="a" style="left:288px;top:741px" width="34" height="34" viewBox="0 0 34 34"><rect x="4" y="4.5" width="25" height="25" fill="#ebebeb"/>
<polygon points="6.7,5 16,8.5 16,9.5 6.7,11.3" fill="#a8a8a8"/>
<polygon points="16,8.5 26.2,4.2 26.2,10.8 16,9.5" fill="#ececec" stroke="#d8d8d8" stroke-width="0.8"/>
<polygon points="4.5,11.3 16,8.7 16,25.8 4.5,28.6" fill="#f2f2f2" stroke="#dadada" stroke-width="0.9"/>
<polygon points="16,8.7 28.8,11.7 28.8,28.8 16,25.8" fill="#a9a9a9"/>
<path d="M7.5 15.2 L12.3 14.8 M12 15 L7.8 23.5 M9.6 13.3 L10.3 14.6 M9.8 18.5 L13.5 21.3" stroke="#bcbcbc" stroke-width="1" fill="none"/>
<text x="18.5" y="23.8" font-family="Liberation Sans" font-weight="bold" font-size="14" textLength="8.2" lengthAdjust="spacingAndGlyphs" fill="#f4f4f4">A</text></svg>
<div class="a" style="left:18px;top:788px;width:106px;height:36px;background:#f0f0f0;box-shadow:inset -1px -1px 0 #696969, inset 1px 1px 0 #fff, inset -2px -2px 0 #a0a0a0;"></div>
<div class="t" style="left:50.00px;top:798px;font-size:16px;line-height:16px;color:#222;transform:scaleX(0.9633);">Quote</div>
<div class="a" style="left:135px;top:788px;width:106px;height:36px;background:#f0f0f0;box-shadow:inset -1px -1px 0 #696969, inset 1px 1px 0 #fff, inset -2px -2px 0 #a0a0a0;"></div>
<div class="t" style="left:162.00px;top:798px;font-size:16px;line-height:16px;color:#222;transform:scaleX(1.0252);">Missed</div>
<div class="a" style="left:251px;top:788px;width:106px;height:36px;background:#f0f0f0;box-shadow:inset -1px -1px 0 #696969, inset 1px 1px 0 #fff, inset -2px -2px 0 #a0a0a0;"></div>
<div class="t" style="left:275.00px;top:798px;font-size:16px;line-height:16px;color:#222;transform:scaleX(1.0046);">Wait List</div>
<div class="a" style="left:367px;top:788px;width:106px;height:36px;background:#f0f0f0;box-shadow:inset -1px -1px 0 #696969, inset 1px 1px 0 #fff, inset -2px -2px 0 #a0a0a0;"></div>
<div class="t" style="left:382.00px;top:798px;font-size:16px;line-height:16px;color:#222;transform:scaleX(1.0212);">Tear Sheet</div>
<div class="a" style="left:985px;top:789px;width:92px;height:34px;background:#f0f0f0;box-shadow:inset -1px -1px 0 #696969, inset 1px 1px 0 #fff, inset -2px -2px 0 #a0a0a0;"></div>
<div class="a" style="left:984px;top:788px;width:94px;height:36px;border:1px solid #000;box-sizing:border-box;"></div>
<div class="t" style="left:1004.00px;top:798px;font-size:16px;line-height:16px;color:#000;font-weight:bold;transform:scaleX(0.9868);">Lookup</div>
</body></html>
